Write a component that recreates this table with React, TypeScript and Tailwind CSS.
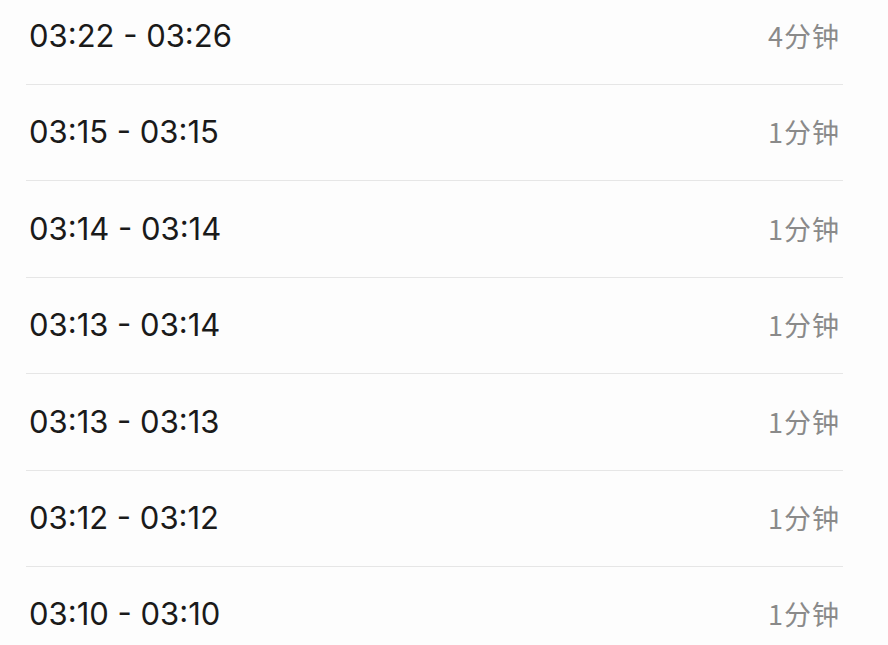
import React from "react";

const rows: [string, string][] = [
  ["03:22 - 03:26", "4分钟"],
  ["03:15 - 03:15", "1分钟"],
  ["03:14 - 03:14", "1分钟"],
  ["03:13 - 03:14", "1分钟"],
  ["03:13 - 03:13", "1分钟"],
  ["03:12 - 03:12", "1分钟"],
  ["03:10 - 03:10", "1分钟"],
];

export default function App() {
  return (
    <div className="w-[888px] h-[645px] overflow-hidden bg-[#fdfdfd]">
      <div className="-mt-[11.4px] pl-[26px] pr-[45px]">
        {rows.map(([t, d], i) => (
          <div
            key={i}
            className="h-[96.4px] flex items-center justify-between border-b border-[#e6e6e6]"
          >
            <span
              className="pl-[3px] text-[31px] text-[#1a1a1a]"
              style={{ fontFamily: "Inter, 'Noto Sans CJK SC', sans-serif" }}
            >
              {t}
            </span>
            <span
              className="pr-[3px] text-[27px] text-[#8a8a8a] tracking-[1px]"
              style={{ fontFamily: "'Noto Sans CJK SC', sans-serif" }}
            >
              {d}
            </span>
          </div>
        ))}
      </div>
    </div>
  );
}
